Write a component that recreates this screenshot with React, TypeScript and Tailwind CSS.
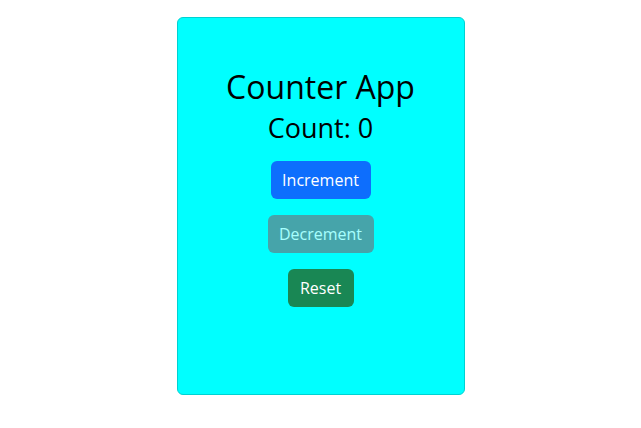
export default function App() {
  return (
    <div className="w-[641px] h-[428px] bg-white flex justify-center" style={{ fontFamily: '"Open Sans", "Noto Sans", sans-serif' }}>
      <div className="mt-[17px] w-[288px] h-[378px] bg-[#00ffff] border border-[#00d2d2] rounded-[6px] flex flex-col items-center pt-[50px]">
        <h1 className="text-[32px] leading-[38px] text-black m-0">Counter App</h1>
        <h2 className="mt-[6px] text-[27px] leading-[31px] text-black">Count: 0</h2>
        <button className="mt-[18px] h-[38px] w-[100px] rounded-[6px] bg-[#0d6efd] text-white text-[16px]">Increment</button>
        <button disabled className="mt-[16px] h-[38px] w-[106px] rounded-[6px] bg-[#6c757d] text-white text-[16px] opacity-[0.65]">Decrement</button>
        <button className="mt-[16px] h-[38px] w-[66px] rounded-[6px] bg-[#198754] text-white text-[16px]">Reset</button>
      </div>
    </div>
  );
}
